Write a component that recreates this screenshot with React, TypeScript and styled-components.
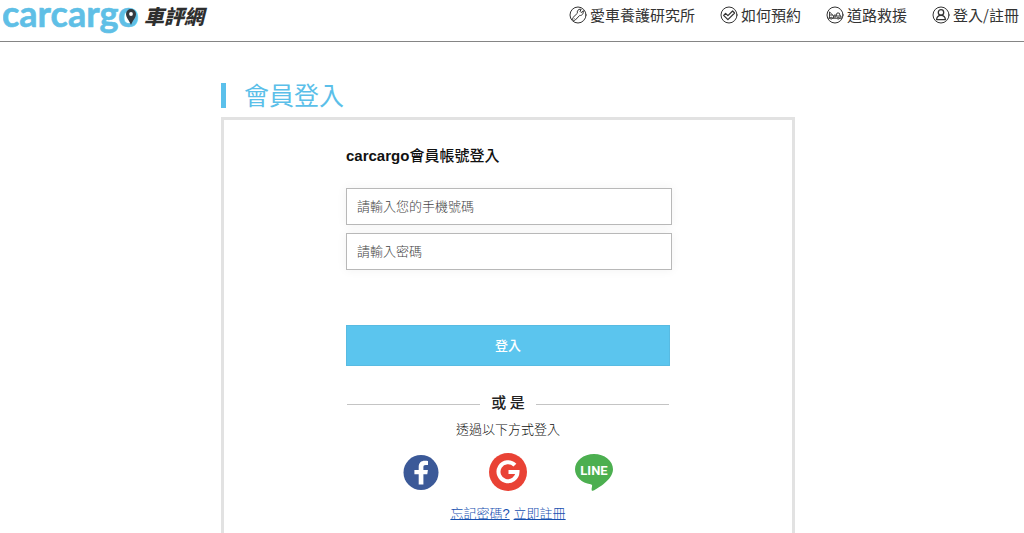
import React from 'react';
import styled, { createGlobalStyle } from 'styled-components';

const sans = `"Liberation Sans", "Noto Sans CJK TC", sans-serif`;
const cjk = `"Noto Sans CJK TC", "Liberation Sans", sans-serif`;

const GlobalStyle = createGlobalStyle`
  *, *::before, *::after { box-sizing: border-box; }
  body {
    margin: 0;
    background: #fff;
    color: #222;
    font-family: ${sans};
    font-size: 13px;
  }
`;

const Header = styled.header`
  display: flex;
  justify-content: space-between;
  align-items: flex-start;
  height: 42px;
  padding: 0 5px 0 3px;
  border-bottom: 1px solid #858585;
`;

const LogoLink = styled.a`
  display: block;
  svg { display: block; }
`;

const Nav = styled.nav`
  display: flex;
  gap: 25px;
  padding-top: 4px;
`;

const NavLink = styled.a`
  display: flex;
  align-items: center;
  gap: 3px;
  color: #333;
  font-family: ${cjk};
  font-size: 15px;
  line-height: 22px;
  text-decoration: none;
  white-space: nowrap;
`;

const Main = styled.main`
  display: flex;
  flex-direction: column;
  width: 100%;
  max-width: 582px;
  margin: 0 auto;
  padding: 41px 8px 32px 0;
`;

const Title = styled.h1`
  margin: 0 0 9px;
  padding: 0 0 2px 18px;
  border-left: 5px solid #5bc0eb;
  color: #5bbfe9;
  font-family: ${cjk};
  font-size: 25px;
  font-weight: 400;
  line-height: 23px;
`;

const Panel = styled.section`
  padding: 24px 24px 16px;
  border: 3px solid #e2e2e2;
`;

const Form = styled.form`
  display: flex;
  flex-direction: column;
  max-width: 324px;
  margin: 0 auto;
`;

const Heading = styled.h2`
  margin: 0 0 21px;
  color: #111;
  font-size: 15px;
  font-weight: 700;
  line-height: 22px;
  span { font-family: ${cjk}; font-weight: 500; }
`;

const Field = styled.input`
  width: calc(100% + 2px);
  height: 37px;
  margin-bottom: 8px;
  padding: 0 10px 2px;
  border: 1px solid #b8b8b8;
  border-radius: 0;
  box-shadow: 0 0 10px rgba(0, 0, 0, 0.06);
  background: #fff;
  color: #333;
  font-family: ${cjk};
  font-size: 13px;
  font-weight: 300;
  &::placeholder { color: #444; opacity: 1; }
`;

const Submit = styled.button`
  height: 41px;
  margin: 47px 0 25px;
  padding: 0 0 2px;
  border: 1px solid #58bbe2;
  background: #5bc5ee;
  color: #fff;
  font-family: ${cjk};
  font-size: 13px;
  font-weight: 500;
  cursor: pointer;
`;

const Divider = styled.div`
  display: flex;
  align-items: center;
  gap: 11px;
  padding: 0 1px;
  color: #222;
  font-family: ${cjk};
  font-size: 15px;
  font-weight: 500;
  line-height: 22px;
  span { padding-bottom: 4px; }
  &::before, &::after {
    content: '';
    flex: 1;
    height: 1px;
    background: #c4c4c4;
  }
`;

const Hint = styled.p`
  margin: 2px 0 13px;
  color: #111;
  font-family: ${cjk};
  font-weight: 300;
  line-height: 20px;
  text-align: center;
`;

const Socials = styled.div`
  display: flex;
  justify-content: center;
  gap: 48px;
`;

const SocialButton = styled.button`
  width: 38px;
  height: 40px;
  padding: 0;
  border: 0;
  background: none;
  cursor: pointer;
  svg { display: block; }
`;

const Links = styled.div`
  display: flex;
  justify-content: center;
  gap: 4px;
  margin-top: 12px;
  line-height: 20px;
`;

const TextLink = styled.a`
  color: #1650b0;
  font-family: ${sans};
  font-weight: 300;
  text-decoration: underline;
`;

const Logo = () => (
  <svg width="206" height="36" viewBox="0 0 206 36" role="img" aria-label="carcargo 車評網">
    <text x="-1" y="27" fontFamily="Lato, sans-serif" fontWeight="700" fontSize="36" fill="#5fbfe6" stroke="#5fbfe6" strokeWidth="0.600">carcargo</text>
    <path d="M128 9a5 5 0 0 0-5 5c0 3.700 3.400 6.500 5 11 1.600-4.500 5-7.300 5-11a5 5 0 0 0-5-5z" fill="#333a40" />
    <circle cx="128" cy="14" r="1.900" fill="#fff" />
    <text x="141" y="24" fontFamily='"Noto Sans CJK TC", sans-serif' fontWeight="900" fontStyle="italic" fontSize="20" fill="#2e2e2e">車評網</text>
  </svg>
);

const NavIcon = ({ children }: { children: React.ReactNode }) => (
  <svg width="18" height="18" viewBox="0 0 18 18" fill="none" stroke="#333" strokeWidth="1" strokeLinejoin="round" strokeLinecap="round" aria-hidden="true">
    <circle cx="9" cy="9" r="8" />
    {children}
  </svg>
);

const navItems = [
  {
    label: '愛車養護研究所',
    icon: <path d="M14.200 5.200l-2 1.300-1.200-1.200 1.200-2c-1.600-.4-3.300.3-3.800 1.900-.2.700-.1 1.300.1 1.900L3.900 11.600c-.7.700-.7 1.700 0 2.400s1.700.7 2.400 0l4.400-4.600c2.100.5 4.200-1.700 3.500-4.200zM5.100 12.800h.1" />,
  },
  {
    label: '如何預約',
    icon: <path d="M3.600 9.400l2-2 2.300 2.300 4.700-4.700 2 2-6.700 6.700z" strokeWidth="1.200" />,
  },
  {
    label: '道路救援',
    icon: (
      <g strokeWidth="0.900">
        <path d="M3.500 12V5.800l4 4.200M3.500 9h3M2.500 12.200h13M7.500 12v-2l1.500-1.500V12M9 10h6v2M10.200 10l.8-3h2.200l1 3" />
        <circle cx="5.200" cy="12.200" r="1" fill="#fff" />
        <circle cx="12.200" cy="12.200" r="1" fill="#fff" />
      </g>
    ),
  },
  {
    label: '登入/註冊',
    icon: (
      <g strokeWidth="1.300">
        <circle cx="9" cy="6.400" r="2.700" />
        <path d="M4.600 13.600c.2-2.600 1.800-4.300 4.400-4.300s4.200 1.700 4.400 4.300z" />
      </g>
    ),
  },
];

const FacebookIcon = () => (
  <svg width="38" height="40" viewBox="0 0 38 40" aria-hidden="true">
    <circle cx="18" cy="20.500" r="17.500" fill="#3b5998" />
    <path d="M15.700 32.500V22.300h-4.300v-4.300h4.300v-3c0-4.300 2.400-6.300 6-6.300 1.500 0 2.600.1 3.300.2v4.100h-2.300c-1.800 0-2.300.9-2.300 2.200v2.800h4.500l-.6 4.300h-3.900v10.200z" fill="#fff" />
  </svg>
);

const GoogleIcon = () => (
  <svg width="38" height="40" viewBox="0 0 38 40" aria-hidden="true">
    <circle cx="19" cy="20" r="19" fill="#e94235" />
    <path d="M25.900 13.200A9.500 9.500 0 1 0 28.500 20H19.500" fill="none" stroke="#fff" strokeWidth="4" />
  </svg>
);

const LineIcon = () => (
  <svg width="38" height="40" viewBox="0 0 38 40" aria-hidden="true">
    <path d="M19 2C8.500 2 0 8.800 0 17.200c0 7.500 6.600 13.800 15.600 15 .9.200 1.500.6 1.500 1.300 0 1.400-.8 3.400-.4 4.700.2.700.9.800 1.700.4C22.500 36.400 38 27.600 38 17.200 38 8.800 29.500 2 19 2z" fill="#4caf50" />
    <text x="19" y="23" textAnchor="middle" fontFamily="Roboto, sans-serif" fontWeight="700" fontSize="13" fill="#fff">LINE</text>
  </svg>
);

export default function App() {
  return (
    <>
      <GlobalStyle />
      <Header>
        <LogoLink href="#"><Logo /></LogoLink>
        <Nav>
          {navItems.map((item) => (
            <NavLink href="#" key={item.label}>
              <NavIcon>{item.icon}</NavIcon>
              {item.label}
            </NavLink>
          ))}
        </Nav>
      </Header>
      <Main>
        <Title>會員登入</Title>
        <Panel>
          <Form onSubmit={(e) => e.preventDefault()}>
            <Heading>carcargo<span>會員帳號登入</span></Heading>
            <Field type="tel" aria-label="手機號碼" placeholder="請輸入您的手機號碼" />
            <Field type="password" aria-label="密碼" placeholder="請輸入密碼" />
            <Submit type="submit">登入</Submit>
            <Divider><span>或 是</span></Divider>
            <Hint>透過以下方式登入</Hint>
            <Socials>
              <SocialButton type="button" aria-label="Facebook"><FacebookIcon /></SocialButton>
              <SocialButton type="button" aria-label="Google"><GoogleIcon /></SocialButton>
              <SocialButton type="button" aria-label="LINE"><LineIcon /></SocialButton>
            </Socials>
            <Links>
              <TextLink href="#">忘記密碼?</TextLink>
              <TextLink href="#">立即註冊</TextLink>
            </Links>
          </Form>
        </Panel>
      </Main>
    </>
  );
}
